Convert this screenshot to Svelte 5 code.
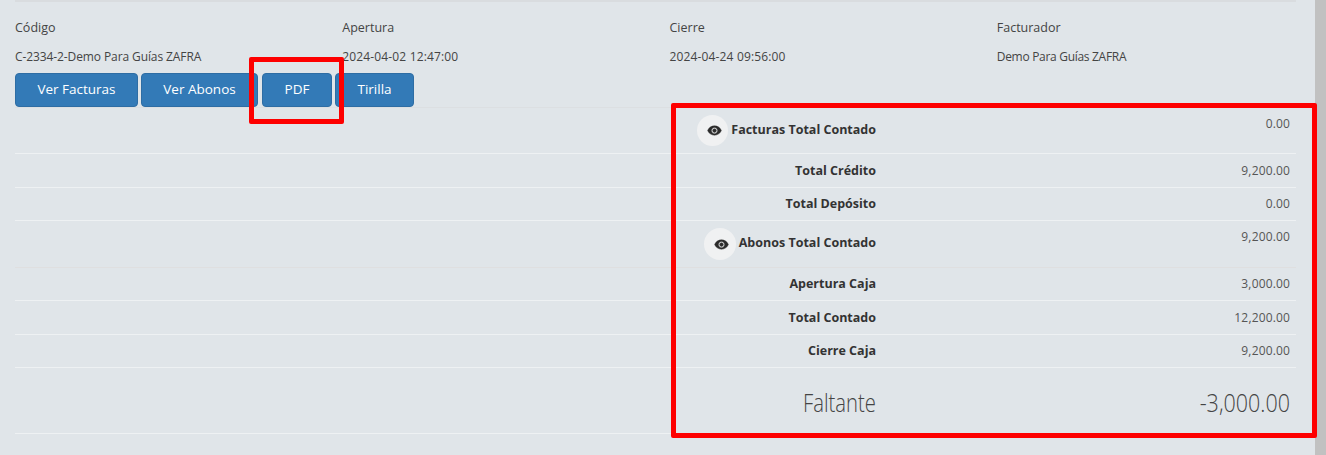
<script>
  const fields = [
    { label: 'Código', value: 'C-2334-2-Demo Para Guías ZAFRA', spacing: 'mid' },
    { label: 'Apertura', value: '2024-04-02 12:47:00', spacing: 'wide' },
    { label: 'Cierre', value: '2024-04-24 09:56:00', spacing: 'wide' },
    { label: 'Facturador', value: 'Demo Para Guías ZAFRA', spacing: 'tight' }
  ];
  const actions = [
    { text: 'Ver Facturas', cls: 'w1' },
    { text: 'Ver Abonos', cls: 'w2' },
    { text: 'PDF', cls: 'w3' },
    { text: 'Tirilla', cls: 'w4' }
  ];
  const rows = [
    { label: 'Facturas Total Contado', value: '0.00', eye: true, size: 'h46' },
    { label: 'Total Crédito', value: '9,200.00', size: 'h34' },
    { label: 'Total Depósito', value: '0.00', size: 'h33' },
    { label: 'Abonos Total Contado', value: '9,200.00', eye: true, big: true, size: 'h47' },
    { label: 'Apertura Caja', value: '3,000.00', size: 'h33' },
    { label: 'Total Contado', value: '12,200.00', size: 'h34' },
    { label: 'Cierre Caja', value: '9,200.00', size: 'h33' }
  ];
</script>

<main class="page">
  <div class="topbar"></div>

  <section class="fields">
    {#each fields as field}
      <div>
        <div class="field-label">{field.label}</div>
        <div class="field-value {field.spacing}">{field.value}</div>
      </div>
    {/each}
  </section>

  <div class="actions">
    {#each actions as action}
      <button class={action.cls}>{action.text}</button>
    {/each}
  </div>

  <section class="summary">
    {#each rows as row}
      <div class="row {row.size}" class:eye-row={row.eye} class:big-row={row.big}>
        <div class="label">
          {#if row.eye}
            <span class="eye" class:big={row.big}>
              <svg viewBox="0 0 24 24" width="15" height="15" aria-hidden="true">
                <path fill="#2b2b2b" stroke="#2b2b2b" stroke-width="0.7" d="M12 4.5C7 4.5 2.73 7.61 1 12c1.73 4.39 6 7.5 11 7.5s9.27-3.11 11-7.5c-1.73-4.39-6-7.5-11-7.5zM12 17c-2.76 0-5-2.24-5-5s2.24-5 5-5 5 2.24 5 5-2.24 5-5 5zm0-8c-1.66 0-3 1.34-3 3s1.34 3 3 3 3-1.34 3-3-1.34-3-3-3z" />
              </svg>
            </span>
          {/if}
          <span class="label-text">{row.label}</span>
        </div>
        <div class="value">{row.value}</div>
      </div>
    {/each}
    <div class="row total">
      <div class="label"><span class="narrow-label">Faltante</span></div>
      <div class="value"><span class="narrow-value">-3,000.00</span></div>
    </div>
  </section>

  <div class="scrollbar"></div>
  <div class="mark mark-pdf"></div>
  <div class="mark mark-summary"></div>
</main>

<style>
  :global(body) {
    margin: 0;
    background: #e0e5e9;
    overflow: hidden;
  }

  .page {
    position: relative;
    height: 455px;
    padding: 0 30px 0 15px;
    box-sizing: border-box;
    color: #444;
    font-family: "Open Sans", sans-serif;
  }

  .topbar {
    width: 1281px;
    height: 2px;
    background: #d9dcdf;
  }

  .fields {
    display: grid;
    grid-template-columns: repeat(4, 327.25px);
    padding-top: 16px;
  }

  .field-label {
    font-size: 12.5px;
    line-height: 20px;
    color: #444;
  }

  .field-value {
    margin-top: 9px;
    font-size: 12px;
    line-height: 20px;
    color: #444;
  }

  .field-value.mid { letter-spacing: -0.1px; }
  .field-value.wide { letter-spacing: 0.15px; }
  .field-value.tight { letter-spacing: -0.3px; }

  .actions {
    display: flex;
    gap: 3px;
    margin-top: 6px;
    height: 34px;
  }

  button {
    height: 34px;
    padding: 0 0 2px;
    background: #337ab7;
    border: 1px solid #2e6da4;
    border-radius: 4px;
    color: #fff;
    font: 13.5px "Open Sans", sans-serif;
  }

  .w1 { width: 123px; }
  .w2 { width: 117px; }
  .w3 { width: 70px; margin-left: 1px; }
  .w4 { width: 79px; }

  .summary {
    width: 1281px;
    border-top: 1px solid #dcdfe2;
  }

  .row {
    display: grid;
    grid-template-columns: 861px 414px;
    box-sizing: border-box;
    border-bottom: 1px solid #eef1f3;
    align-items: center;
  }

  .h33 { height: 33px; }
  .h34 { height: 34px; }
  .h46 { height: 46px; }
  .h47 { height: 47px; }

  .label {
    display: flex;
    justify-content: flex-end;
    align-items: flex-start;
    gap: 3px;
    color: #333;
    font-size: 12.5px;
    font-weight: 700;
    line-height: 20px;
  }

  .value {
    text-align: right;
    color: #555;
    font-size: 12px;
    line-height: 20px;
    letter-spacing: 0.15px;
  }

  .eye-row { align-items: start; }
  .eye-row .label { padding-top: 7px; }
  .eye-row .value { padding-top: 6px; }
  .eye-row .label-text { margin-top: 5px; }

  .big-row {
    border-bottom-color: #dfdfe0;
  }

  .eye {
    display: flex;
    align-items: center;
    justify-content: center;
    width: 31px;
    height: 31px;
    border-radius: 50%;
    background: #f0f1f2;
    padding: 0 0 0 4px;
    box-sizing: border-box;
  }

  .eye.big {
    width: 32px;
    height: 32px;
  }

  .row.total { height: 66px; padding-top: 2px; }

  .narrow-label,
  .narrow-value {
    display: inline-block;
    font-size: 25px;
    font-weight: 300;
    line-height: 32px;
    letter-spacing: 0;
    color: #444;
    transform-origin: right center;
  }

  .narrow-label { transform: scaleX(0.81); }
  .narrow-value { transform: scaleX(0.86); }

  .mark {
    position: absolute;
    box-sizing: border-box;
    border: 5px solid #fe0000;
    border-radius: 2px;
  }

  .mark-pdf { left: 249px; top: 57px; width: 95px; height: 67px; }
  .mark-summary { left: 671px; top: 103px; width: 646px; height: 335px; }

  .scrollbar {
    position: absolute;
    top: 0;
    right: 0;
    bottom: 0;
    width: 11px;
    background: #c1c1c1;
  }
</style>
